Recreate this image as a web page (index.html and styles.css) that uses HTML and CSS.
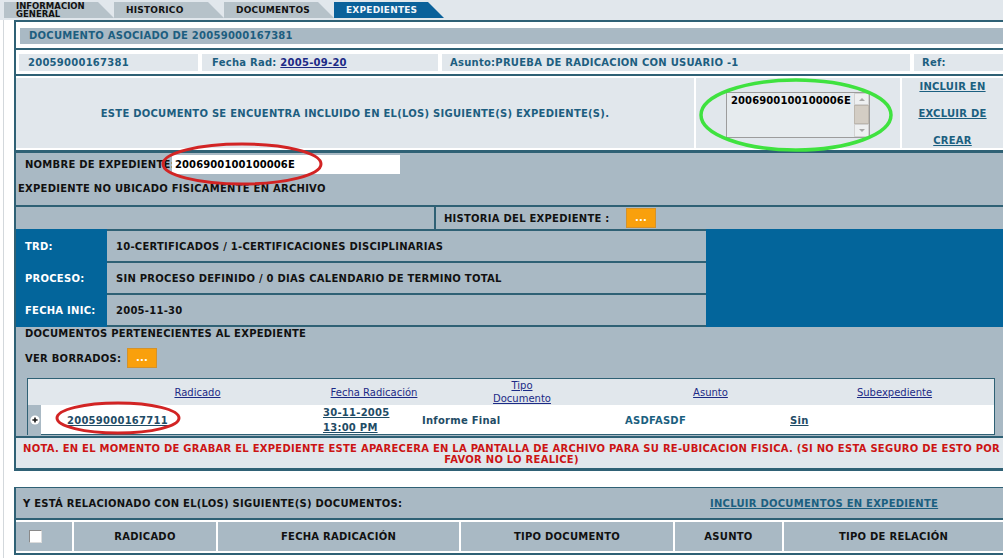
FILE: index.html
```html
<!DOCTYPE html>
<html lang="es">
<head>
<meta charset="utf-8">
<title>Expedientes</title>
<link rel="stylesheet" href="styles.css">
</head>
<body>
<div class="tabs">
  <div class="tab tab-two">INFORMACION<br>GENERAL</div>
  <div class="tab">HISTORICO</div>
  <div class="tab">DOCUMENTOS</div>
  <div class="tab active">EXPEDIENTES</div>
</div>
<div class="frame">
  <div class="main">
    <div class="title-wrap"><div class="title">DOCUMENTO ASOCIADO DE 20059000167381</div></div>
    <div class="info-row">
      <div class="cell c-rad">20059000167381</div>
      <div class="cell c-fecha">Fecha Rad: <a class="navy" href="#">2005-09-20</a></div>
      <div class="cell c-asunto">Asunto:PRUEBA DE RADICACION CON USUARIO -1</div>
      <div class="cell c-ref">Ref:</div>
    </div>
    <div class="incl-row">
      <div class="incl-text">ESTE DOCUMENTO SE ENCUENTRA INCLUIDO EN EL(LOS) SIGUIENTE(S) EXPEDIENTE(S).</div>
      <div class="incl-list">
        <div class="listbox">
          <div class="lb-text">2006900100100006E</div>
          <div class="lb-scroll">
            <div class="lb-btn lb-up"></div>
            <div class="lb-thumb"></div>
            <div class="lb-btn lb-down"></div>
          </div>
        </div>
      </div>
      <div class="incl-links">
        <a href="#">INCLUIR EN</a>
        <a href="#">EXCLUIR DE</a>
        <a href="#">CREAR</a>
      </div>
    </div>
    <div class="exp">
      <div class="name-row">
        <div class="name-label">NOMBRE DE EXPEDIENTE:</div>
        <div class="name-input">2006900100100006E</div>
      </div>
      <div class="no-ubicado">EXPEDIENTE NO UBICADO FISICAMENTE EN ARCHIVO</div>
      <div class="hist-row">
        <div class="hist-left"></div>
        <div class="hist-right">
          <span class="hist-label">HISTORIA DEL EXPEDIENTE :</span>
          <span class="btn">...</span>
        </div>
      </div>
      <div class="trd">
        <div class="trd-labels">
          <div class="trd-row">TRD:</div>
          <div class="trd-row">PROCESO:</div>
          <div class="trd-row last">FECHA INIC:</div>
        </div>
        <div class="trd-values">
          <div class="trd-row">10-CERTIFICADOS / 1-CERTIFICACIONES DISCIPLINARIAS</div>
          <div class="trd-row">SIN PROCESO DEFINIDO / 0 DIAS CALENDARIO DE TERMINO TOTAL</div>
          <div class="trd-row last">2005-11-30</div>
        </div>
        <div class="trd-fill"></div>
      </div>
      <div class="docs">
        <div class="docs-title">DOCUMENTOS PERTENECIENTES AL EXPEDIENTE</div>
        <div class="borrados">
          <span class="borrados-label">VER BORRADOS:</span>
          <span class="btn">...</span>
        </div>
        <div class="inner">
          <div class="inner-head">
            <div></div>
            <div class="h1"><a href="#">Radicado</a></div>
            <div><a href="#">Fecha Radicación</a></div>
            <div class="two"><a href="#">Tipo<br>Documento</a></div>
            <div><a href="#">Asunto</a></div>
            <div><a href="#">Subexpediente</a></div>
          </div>
          <div class="inner-data">
            <div class="plus-cell">
              <svg width="10" height="10" viewBox="0 0 10 10"><circle cx="5" cy="5" r="4.6" fill="#fff"/><path d="M5 2.4v5.2M2.4 5h5.2" stroke="#1a1a1a" stroke-width="1.6"/></svg>
            </div>
            <div class="d1"><a class="dteal" href="#">20059000167711</a></div>
            <div class="d2"><a class="dteal" href="#">30-11-2005<br>13:00 PM</a></div>
            <div class="d3">Informe Final</div>
            <div class="d4">ASDFASDF</div>
            <div class="d5"><a class="dteal" href="#">Sin</a></div>
          </div>
        </div>
      </div>
      <div class="note">NOTA. EN EL MOMENTO DE GRABAR EL EXPEDIENTE ESTE APARECERA EN LA PANTALLA DE ARCHIVO PARA SU RE-UBICACION FISICA. (SI NO ESTA SEGURO DE ESTO POR FAVOR NO LO REALICE)</div>
    </div>
  </div>
  <div class="rel">
    <div class="rel-band">
      <span class="rel-title">Y ESTÁ RELACIONADO CON EL(LOS) SIGUIENTE(S) DOCUMENTOS:</span>
      <a class="rel-link" href="#">INCLUIR DOCUMENTOS EN EXPEDIENTE</a>
    </div>
    <div class="rel-head">
      <div class="rh cb"><span class="checkbox"></span></div>
      <div class="rh w-rad">RADICADO</div>
      <div class="rh w-fecha">FECHA RADICACIÓN</div>
      <div class="rh w-tipo">TIPO DOCUMENTO</div>
      <div class="rh w-asunto">ASUNTO</div>
      <div class="rh w-rel">TIPO DE RELACIÓN</div>
    </div>
  </div>
</div>
<svg class="marks" width="1003" height="558" viewBox="0 0 1003 558">
  <ellipse cx="796" cy="115" rx="95" ry="35" fill="none" stroke="#3fe23f" stroke-width="3.5"/>
  <ellipse cx="242" cy="164" rx="79" ry="20" fill="none" stroke="#d22424" stroke-width="3"/>
  <ellipse cx="118" cy="418" rx="61" ry="15" fill="none" stroke="#d22424" stroke-width="3"/>
</svg>
</body>
</html>
```
FILE: styles.css
```css
* { box-sizing: border-box; margin: 0; padding: 0; }
html, body { background: #fff; }
body {
  width: 1003px;
  height: 558px;
  overflow: hidden;
  position: relative;
  font-family: "DejaVu Sans", Verdana, sans-serif;
  font-size: 10px;
  font-weight: bold;
  letter-spacing: 0.25px;
  color: #111;
}
a { color: #1b5f80; text-decoration: underline; }
a.navy { color: #1c2a86; }
a.dteal { color: #1f4c66; }

/* tabs */
.tabs {
  height: 20px;
  background: #e1e7ec;
  padding: 2px 0 0 4px;
  display: flex;
}
.tab {
  width: 110px;
  height: 16px;
  background: #b6c2c9;
  clip-path: polygon(0 0, calc(100% - 16px) 0, 100% 100%, 0 100%);
  font-size: 9px;
  letter-spacing: 0.2px;
  line-height: 16px;
  padding-left: 12px;
  color: #111;
}
.tab-two { line-height: 8px; letter-spacing: 0; font-size: 8.5px; padding-top: 0; }
.tab.active { background: #0a619a; color: #f2f6fa; }

/* frame */
.frame {
  margin-left: 3px;
  border-left: 1px solid #d3d8dc;
  padding-left: 10px;
  height: 538px;
}
.main {
  border-left: 2px solid #2f6175;
  border-top: 2px solid #2f6175;
  border-bottom: 3px solid #2f6175;
}
.title-wrap { padding: 6px 0 4px 4px; }
.title {
  height: 16px;
  line-height: 16px;
  background: #a9b9c4;
  color: #1d5e80;
  padding-left: 9px;
}

.info-row {
  border-top: 2px solid #2f6175;
  padding: 4px 0 3px 3px;
  display: flex;
  gap: 4px;
}
.info-row .cell {
  height: 17px;
  line-height: 17px;
  background: #e1e7ec;
  color: #1d5e80;
  padding-left: 9px;
  white-space: nowrap;
}
.c-rad { width: 179px; }
.c-fecha { width: 236px; padding-left: 10px !important; }
.c-asunto { width: 468px; padding-left: 8px !important; }
.c-ref { flex: 1; padding-left: 8px !important; }

.incl-row {
  border-top: 2px solid #2f6175;
  padding: 2px 0;
  display: flex;
  gap: 2px;
  height: 76px;
}
.incl-text {
  width: 678px;
  background: #e1e7ec;
  color: #1d5e80;
  display: flex;
  align-items: center;
  justify-content: center;
}
.incl-list {
  width: 204px;
  background: #e1e7ec;
  display: flex;
  justify-content: center;
  padding-top: 14px;
}
.listbox {
  width: 144px;
  height: 46px;
  border: 1px solid #9c9c9c;
  background: #e6ebee;
  display: flex;
}
.lb-text {
  flex: 1;
  padding: 2px 0 0 4px;
  line-height: 12px;
  letter-spacing: 0.1px;
  color: #000;
}
.lb-scroll {
  width: 15px;
  display: flex;
  flex-direction: column;
  background: #eef0f1;
}
.lb-btn {
  background: #eef0f1;
  border: 1px solid #d2d2d2;
  display: flex;
  align-items: center;
  justify-content: center;
}
.lb-up { height: 12px; }
.lb-down { height: 13px; }
.lb-up::after {
  content: "";
  border-left: 3px solid transparent;
  border-right: 3px solid transparent;
  border-bottom: 3px solid #a6a6a6;
}
.lb-down::after {
  content: "";
  border-left: 3px solid transparent;
  border-right: 3px solid transparent;
  border-top: 3px solid #a6a6a6;
}
.lb-thumb {
  height: 19px;
  background: #d3cdc4;
  border: 1px solid #bdb7ae;
}
.incl-links {
  flex: 1;
  background: #e1e7ec;
  display: flex;
  flex-direction: column;
  align-items: center;
  gap: 15px;
  padding-top: 3px;
  line-height: 12px;
}

/* expediente */
.exp {
  border-top: 3px solid #2f6175;
  background: #a9b9c4;
}
.name-row {
  display: flex;
  align-items: center;
  padding: 2px 0 0 9px;
  height: 21px;
}
.name-label { width: 147px; white-space: nowrap; }
.name-input {
  width: 228px;
  height: 19px;
  line-height: 19px;
  background: #fff;
  color: #000;
  padding-left: 3px;
  letter-spacing: 0.1px;
}
.no-ubicado {
  padding: 9px 0 10px 2px;
  line-height: 12px;
}
.hist-row {
  border-top: 2px solid #2f6175;
  display: flex;
  height: 24px;
}
.hist-left {
  width: 420px;
  border-right: 2px solid #2f6175;
}
.hist-right {
  flex: 1;
  display: flex;
  align-items: center;
  padding-left: 8px;
}
.hist-label { width: 182px; white-space: nowrap; }
.btn {
  width: 30px;
  height: 20px;
  background: #f9a00c;
  border: 1px solid #d3922c;
  color: #fff;
  display: flex;
  align-items: center;
  justify-content: center;
  line-height: 1;
}

.trd {
  display: flex;
  background: #03659b;
}
.trd-labels { width: 91px; color: #fff; }
.trd-values { width: 599px; }
.trd-fill { flex: 1; }
.trd-row {
  height: 32px;
  border-top: 2px solid #2f6175;
  padding-left: 9px;
  display: flex;
  align-items: center;
  white-space: nowrap;
}
.trd-row.last {
  height: 34px;
  border-bottom: 2px solid #2f6175;
}
.trd-labels .trd-row { border-color: #03659b; }
.trd-values .trd-row { background: #a9b9c4; }

.docs { padding: 1px 0 1px 9px; }
.docs-title { line-height: 12px; }
.borrados {
  display: flex;
  align-items: center;
  margin-top: 8px;
  height: 20px;
}
.borrados-label { width: 102px; white-space: nowrap; }
.inner {
  margin: 10px 8px 0 2px;
  border: 1px solid #2f6175;
}
.inner-head {
  display: grid;
  grid-template-columns: 13px 289px 88px 208px 169px 1fr;
  height: 26px;
  background: #e1e7ec;
  font-weight: normal;
  letter-spacing: 0;
}
.inner-head > div {
  display: flex;
  align-items: center;
  justify-content: center;
  text-align: center;
  white-space: nowrap;
}
.inner-head a { color: #1c2a86; }
.inner-head .h1 { padding-left: 24px; }
.inner-head .two { line-height: 13px; }
.inner-data {
  display: grid;
  grid-template-columns: 13px 278px 99px 203px 165px 1fr;
  height: 29px;
  background: #fff;
}
.inner-data > div {
  display: flex;
  align-items: center;
  padding-left: 4px;
  white-space: nowrap;
}
.inner-data .plus-cell {
  background: #a9b9c4;
  padding-left: 2px;
}
.inner-data .d1 { padding-left: 26px; }
.inner-data .d2 { line-height: 15px; }
.inner-data .d3 { color: #1f4c66; }
.inner-data .d4 { color: #1b5f80; }

.note {
  border-top: 2px solid #2f6175;
  background: #e1e7ec;
  height: 32px;
  padding: 5px 2px 0 6px;
  text-align: center;
  color: #cc1414;
  line-height: 11px;
}

/* related documents */
.rel {
  margin-top: 16px;
  border-left: 2px solid #2f6175;
  border-top: 1px solid #2f6175;
}
.rel-band {
  height: 32px;
  display: flex;
  align-items: center;
  border-bottom: 2px solid #2f6175;
  background: #a9b9c4;
  padding-left: 7px;
}
.rel-title { width: 687px; white-space: nowrap; }
.rel-link { color: #1b5f80; }
.rel-head {
  display: flex;
  gap: 2px;
  padding: 2px 0;
  border-bottom: 2px solid #2f6175;
}
.rh {
  height: 29px;
  background: #a9b9c4;
  display: flex;
  align-items: center;
  justify-content: center;
  white-space: nowrap;
}
.rh.cb { width: 56px; justify-content: flex-start; padding-left: 13px; }
.w-rad { width: 142px; }
.w-fecha { width: 241px; }
.w-tipo { width: 212px; }
.w-asunto { width: 107px; }
.w-rel { flex: 1; }
.checkbox {
  width: 13px;
  height: 13px;
  background: #fff;
  border: 1px solid #8a8a8a;
  border-right-color: #dcdcdc;
  border-bottom-color: #dcdcdc;
}

.marks {
  position: absolute;
  top: 0;
  left: 0;
  pointer-events: none;
}
```
